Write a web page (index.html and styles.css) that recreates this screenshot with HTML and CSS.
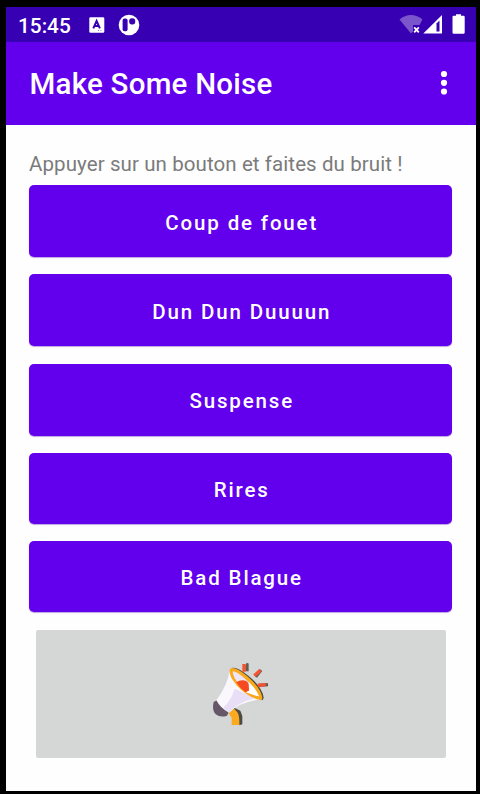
FILE: index.html
```html
<!DOCTYPE html>
<html lang="fr">
<head>
<meta charset="utf-8">
<title>Make Some Noise</title>
<link rel="stylesheet" href="styles.css">
</head>
<body>
<div class="phone">
  <div class="status">
    <span class="clock">15:45</span>
    <svg class="ic-a" width="16" height="16" viewBox="0 0 16 16"><rect x=".3" y=".3" width="15" height="15.4" rx="1.2" fill="#fff"/><path d="M4.300 11.400 7.600 4l3.300 7.400M5.600 9h4" fill="none" stroke="#3700b3" stroke-width="2"/><path d="M9 13.500h1M11.500 13.500h1" stroke="#9a80d9"/></svg>
    <svg class="ic-p" width="22" height="22" viewBox="0 0 22 22"><circle cx="11" cy="11" r="10.300" fill="#fff"/><rect x="4.600" y="4.400" width="5" height="12.800" rx="2" fill="#3700b3"/><rect x="11.200" y="4.200" width="6" height="6.200" rx="2.600" fill="#3700b3"/></svg>
    <span class="spacer"></span>
    <svg width="67" height="22" viewBox="0 0 67 22"><path d="M.5 5.500C7-.5 17-.5 23.500 5.500L20.500 11H14v6.500L12 19.500z" fill="#7a55cb"/><path d="m15.200 13.400 4.600 5m0-5-4.600 5" stroke="#fff" stroke-width="1.800"/><path d="M24.300 19.500 43 1v18.500z" fill="#fff"/><path d="M37.500 9.500 40.500 6.500v11h-3z" fill="#3700b3"/><path d="M57 .3h5v1.500H64.500q1.200 0 1.200 1.200v15.500q0 1.300-1.200 1.300H54.700q-1.200 0-1.200-1.300v-15.500q0-1.200 1.200-1.200H57z" fill="#fff"/></svg>
  </div>
  <header class="bar">
    <h1>Make Some Noise</h1>
    <svg width="8" height="26" viewBox="0 0 8 26"><g fill="#fff"><circle cx="4" cy="4" r="3.100"/><circle cx="4" cy="12.800" r="3.100"/><circle cx="4" cy="21.500" r="3.100"/></g></svg>
  </header>
  <main>
    <p>Appuyer sur un bouton et faites du bruit !</p>
    <div class="buttons">
      <button>Coup de fouet</button>
      <button>Dun Dun Duuuun</button>
      <button>Suspense</button>
      <button>Rires</button>
      <button>Bad Blague</button>
    </div>
    <button class="horn" aria-label="Bruit">
      <svg width="80" height="90" viewBox="0 0 240 270">
        <path d="M100 172 121 182 127 198V223L118 226 110 188 96 190z" fill="#4d4a45"/>
        <path d="M85 188 103 176 113 188Q119 197 118 225H95V203z" fill="#fbaa20"/>
        <path d="M41 156 51 151 87 186 81 197Q62 204 47 193 35 181 41 156z" fill="#655668"/>
        <path d="M89 62Q83 105 49 151Q62 176 87 188Q122 155 184 148z" fill="#faf8fd"/>
        <path d="M104 116 168 144Q113 157 87 188L69 174Q94 150 104 116z" fill="#e8dff6"/>
        <path d="M94 54Q110 48 145 77 187 111 191 143L188 151 163 135z" fill="#504d41"/>
        <path d="M90 57Q102 46 141 78 185 116 187 145 186 154 172 148 139 137 111 107 83 75 90 57z" fill="#fba91c"/>
        <path d="M98 64Q111 65 136 87 170 117 177 139 154 136 120 105 98 83 98 64z" fill="#eee6f7"/>
        <path d="M109 97Q124 86 140 94 153 105 147 122L137 127Q119 115 109 97z" fill="#f64a22"/>
        <path d="M146 96Q166 115 177 139 158 135 137 127L147 122z" fill="#fff"/>
        <g fill="none" stroke-width="10"><path d="m138 43 3 1v20M183 60 167 80M176 106l28-2" stroke="#665b50"/><path d="m132 42v23M181 61 163 77M173 106l24-2" stroke="#f5532f"/></g>
      </svg>
    </button>
  </main>
</div>
</body>
</html>
```
FILE: styles.css
```css
* { box-sizing: border-box; }
body { margin: 0; background: #000; font-family: Roboto, sans-serif; }
.phone { width: 469.5px; height: 784px; margin: 7px 0 0 6px; background: #fefefe; display: flex; flex-direction: column; }
.status { height: 35px; flex: none; background: #3700b3; color: #fff; display: flex; align-items: center; padding: 1px 9.500px 0 12px; }
.clock { font-size: 20.800px; font-weight: 500; width: 71px; padding-top: 1px; white-space: nowrap; }
.ic-a { margin-right: 12.500px; }
.spacer { flex: 1; }
.bar { height: 82.500px; flex: none; background: #6200ee; color: #fff; display: flex; align-items: center; justify-content: space-between; padding: 0 28px 0 23.500px; }
h1 { margin: 0; padding-top: 2px; font-size: 29.500px; font-weight: 500; letter-spacing: .23px; white-space: nowrap; }
main { padding: 26px 23.500px 0 23px; display: flex; flex-direction: column; }
p { margin: 0; height: 34.500px; line-height: 26px; font-size: 20.500px; letter-spacing: .09px; color: #7b7b7b; white-space: nowrap; }
.buttons { display: grid; grid-template-rows: 72px 72px 72px 71px 70.500px; row-gap: 17.250px; }
button { border: 0; padding: 0; font: 500 20.500px Roboto, sans-serif; color: #fff; background: #6200ee; border-radius: 5px; letter-spacing: 1.850px; box-shadow: 0 1px 1px #bda6e0; }
.buttons button { padding: 3px 0 0 2.500px; }
.horn { margin: 18px 6px 0 6.500px; height: 128.500px; border-radius: 2px; background: #d5d7d6; box-shadow: none; display: flex; justify-content: center; }
.horn svg { margin: 20px 0 0 -2px; }
```
